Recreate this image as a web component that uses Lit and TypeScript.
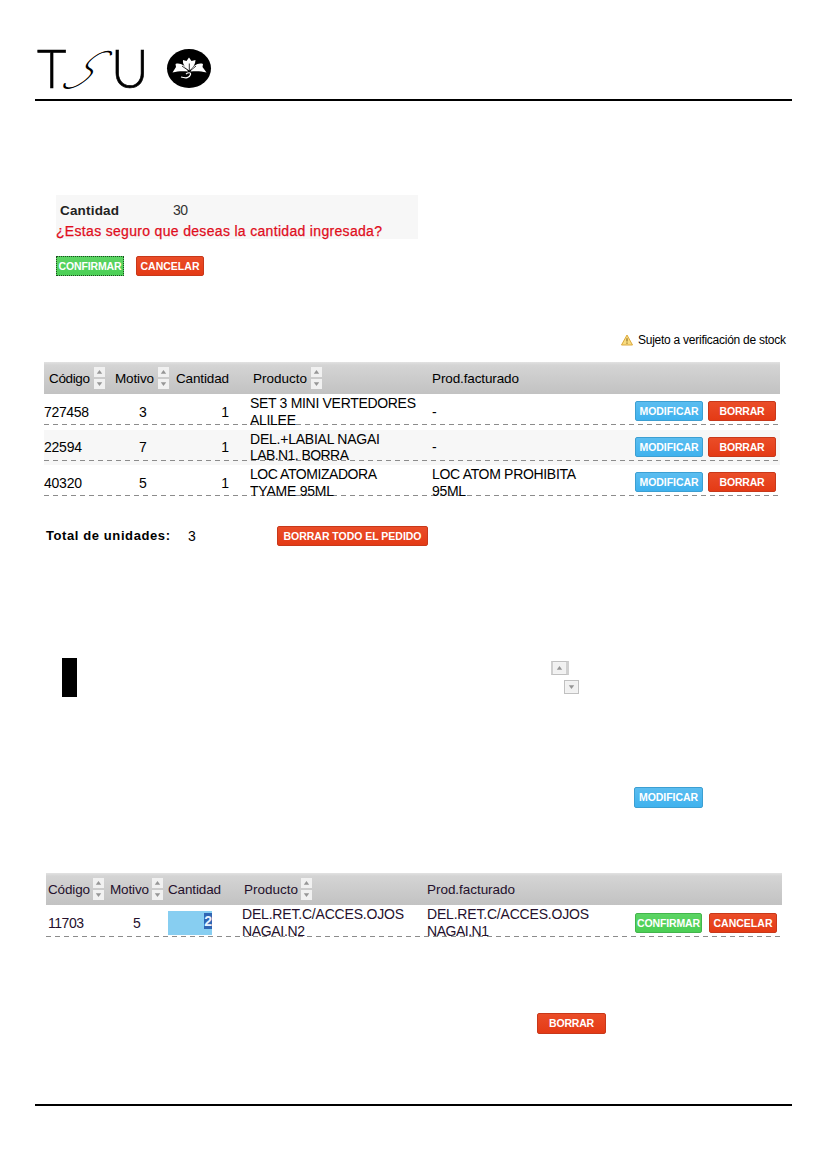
import { LitElement, html, css, svg } from "lit";
import { customElement, property } from "lit/decorators.js";

/** A single line of text tracked out (or in) to a given width. */
@customElement("fit-text")
class FitText extends LitElement {
  @property() text = "";
  @property({ type: Number }) width = 0;
  static styles = css`
    :host { display: inline-block; white-space: pre; }
    .t { display: inline-block; }
  `;
  render() {
    return html`<span class="t">${this.text}</span>`;
  }
  updated() {
    const el = this.renderRoot.querySelector(".t") as HTMLElement;
    el.style.letterSpacing = "0px";
    const natural = el.getBoundingClientRect().width;
    const n = this.text.length;
    if (this.width && n > 1) {
      el.style.letterSpacing = `${(this.width - natural) / (n - 1)}px`;
    }
  }
}

const fit = (text: string, width: number) =>
  html`<fit-text .text=${text} .width=${width}></fit-text>`;

@customElement("action-button")
class ActionButton extends LitElement {
  @property() label = "";
  @property() kind = "red";
  @property({ type: Number }) textWidth = 0;
  static styles = css`
    :host { display: block; }
    .b {
      display: flex; align-items: center; justify-content: center;
      box-sizing: border-box; width: 100%; height: 100%; padding: 0; margin: 0;
      border: 1px solid; border-radius: 2px; color: #fff;
      font: bold 10.5px/12px "Liberation Sans", Arial, sans-serif;
    }
    .red { background: linear-gradient(#ea4d28, #e43a15); border-color: #c8381a; }
    .blue { background: linear-gradient(#5bbdf0, #3fb2ee); border-color: #3c9fd2; }
    .green { background: linear-gradient(#5bd463, #4bcf55); border-color: #43b54c; }
    .focused { border: 1px dotted #1c4a20; border-radius: 0; }
  `;
  render() {
    return html`<button class="b ${this.kind}">${fit(this.label, this.textWidth)}</button>`;
  }
}

const WIDTHS: Record<string, number> = {
  CONFIRMAR: 63, CANCELAR: 59, MODIFICAR: 59, BORRAR: 45, "BORRAR TODO EL PEDIDO": 138,
};
const btn = (label: string, kind: string, cls = "") =>
  html`<action-button class="btn ${cls}" .label=${label} .kind=${kind} .textWidth=${WIDTHS[label]}></action-button>`;

const arrow = (up: boolean) => html`<svg class="arrow" width="11" height="10" viewBox="0 0 11 10">
  <rect width="11" height="10" fill="#f1f1f1"></rect>
  ${up
    ? svg`<path d="M5.5 3 L8.2 6.8 H2.8 Z" fill="#969696"></path>`
    : svg`<path d="M5.5 7 L8.2 3.2 H2.8 Z" fill="#969696"></path>`}
</svg>`;
const sorter = () => html`<span class="sorter">${arrow(true)}${arrow(false)}</span>`;

const rows = [
  { code: ["727458", 45], reason: "3", prod: [["SET 3 MINI VERTEDORES", 166], ["ALILEE", 46]], inv: [["-", 0]] },
  { code: ["22594", 38], reason: "7", prod: [["DEL.+LABIAL NAGAI", 130], ["LAB.N1. BORRA", 99]], inv: [["-", 0]] },
  { code: ["40320", 38], reason: "5", prod: [["LOC ATOMIZADORA", 127], ["TYAME 95ML", 84]], inv: [["LOC ATOM PROHIBITA", 144], ["95ML", 34]] },
] as any[];

const lines = (items: any[]) =>
  html`<div class="lines">${items.map(([t, w]) => html`<div>${fit(t, w)}</div>`)}</div>`;

@customElement("app-root")
class AppRoot extends LitElement {
  static styles = css`
    :host {
      display: block; width: 827px; height: 1169px; overflow: hidden;
      background: #fff; color: #000;
      font: 14px/16px "Liberation Sans", Arial, sans-serif;
    }
    .page { display: flex; flex-direction: column; box-sizing: border-box; height: 1169px; align-items: flex-start; }
    .head { box-sizing: border-box; width: 757px; height: 101px; margin-left: 35px; padding-top: 46px; border-bottom: 2px solid #000; }
    .logo { display: block; overflow: visible; }
    .mark { font-family: Lato, sans-serif; font-weight: 300; }
    .swash { font-weight: 100; }
    .ask { box-sizing: border-box; width: 362px; height: 44px; margin: 94px 0 0 56px; padding-top: 5px; background: #f7f7f7; font-size: 14px; line-height: 21px; }
    .qty { display: flex; height: 21px; padding-left: 4px; }
    .qty .k { width: 113px; font-weight: bold; font-size: 13.5px; color: #222; }
    .qty .v { color: #333; }
    .warn { height: 18px; color: #e00d1c; line-height: 20px; -webkit-text-stroke: 0.25px #e00d1c; }
    .actions { display: flex; gap: 12px; margin: 17px 0 0 56px; }
    .btn { width: 68px; height: 20px; }
    .stock { display: flex; align-items: center; gap: 5px; height: 16px; margin: 56px 0 0 621px; font-size: 12px; }
    .th { display: grid; align-items: center; height: 32px; font-size: 13.5px; background: linear-gradient(#e2e2e2 0, #d4d4d4 3px, #c2c2c2 100%); }
    .cell { display: flex; align-items: center; gap: 4px; }
    .cell fit-text { padding-top: 2px; }
    .sorter { display: flex; flex-direction: column; gap: 2px; }
    .arrow { display: block; }
    .table { width: 736px; }
    .one { margin: 14px 0 0 44px; }
    .two { margin: 65px 0 0 46px; color: #24102c; }
    .one .th { grid-template-columns: 66px 61px 77px 179px auto; padding-left: 5px; }
    .two .th { grid-template-columns: 62px 58px 76px 183px auto; padding-left: 2px; }
    .two .cell { gap: 3px; }
    .row { height: 35.5px; }
    .row:nth-child(odd) { background: #f7f7f7; }
    .tr {
      display: grid; grid-template-columns: 71px 56px 58px 21px 182px 203px auto; align-items: center; height: 31px;
      background-image: repeating-linear-gradient(90deg, #8c8c8c 0 5px, transparent 5px 9px);
      background-size: 100% 1px; background-position: 0 30px; background-repeat: no-repeat;
    }
    .two .tr { grid-template-columns: 62px 54px 4px 44px 30px 185px 208px auto; padding-left: 2px; height: 32px; background-position: 0 31px; }
    .mid { text-align: center; padding-top: 4px; }
    .side { padding-top: 4px; }
    .num { text-align: right; padding-top: 4px; }
    .lines { height: 31px; line-height: 16.5px; overflow: hidden; padding-top: 1px; box-sizing: border-box; }
    .pair { display: flex; gap: 5px; padding-top: 3px; }
    .two .pair { gap: 7px; padding-top: 4px; }
    .two .pair .btn:first-child { width: 67px; }
    .input { display: flex; justify-content: flex-end; height: 24px; margin-top: 5px; background: #87cef1; }
    .sel { height: 16px; margin-top: 2px; line-height: 17px; background: #2f66b4; color: #e8f4ff; font-weight: bold; }
    .total { display: flex; align-items: center; height: 20px; margin: 25px 0 0 46px; }
    .total .k { width: 142px; font-weight: bold; font-size: 13px; }
    .total .v { width: 89px; }
    .total .btn { width: 151px; }
    .legend { display: flex; align-items: flex-start; height: 39px; margin: 112px 0 0 62px; }
    .bar { width: 15px; height: 39px; background: #000; }
    .keys { display: flex; flex-direction: column; gap: 5px; margin: 3px 0 0 474px; }
    .key { display: flex; align-items: center; justify-content: center; box-sizing: border-box; width: 15px; height: 14px; border: 1px solid #c0c0c0; background: #f3f3f3; }
    .key.up { width: 18px; border-right: 3px solid #d0d0d0; border-left: 2px solid #cfcfcf; }
    .key.down { margin-left: 13px; }
    .lone { width: 69px; height: 21px; }
    .edit { margin: 90px 0 0 634px; }
    .del { margin: 76px 0 0 537px; }
    .foot { width: 757px; height: 2px; margin: 70px 0 0 35px; background: #000; }
  `;
  render() {
    return html`<div class="page">
      <header class="head">
        <svg class="logo" width="180" height="46" viewBox="0 0 180 46">
          <g class="mark" fill="#000">
            <text transform="translate(2 41.5) scale(.94 1)" font-size="54" stroke="#000" stroke-width=".6">T</text>
            <text class="swash" transform="translate(22.500 41.5) skewX(-46) scale(.84 1)" font-size="52" stroke="#000" stroke-width="1">S</text>
            <text transform="translate(76 41.5) scale(.96 1)" font-size="54" stroke="#000" stroke-width=".6">U</text>
          </g>
          <ellipse cx="154" cy="22.5" rx="22" ry="19.5" fill="#000"></ellipse>
          <path fill="#fff" d="M154 24.5 C149 21 147.500 17 148 14 L151.500 15 L154 11.500 L156.500 15 L160.500 14 C160.500 18 158 21.500 154.500 24.500 Z"></path>
          <path fill="#fff" d="M153 25.500 C151 19.500 145 16.500 140.500 18 L141 21 L137.500 26.500 C143 25 148 25 153 25.500 Z"></path>
          <path fill="#fff" d="M155.500 25.500 C158 19.500 163 16.500 168 18 L167.500 21 L171.500 26.500 C166 25 161 25 155.500 25.500 Z"></path>
          <path d="M154.300 25 V17.500 M154 25 L147 20 M155 25 L161 20" stroke="#000" stroke-width=".8" fill="none"></path>
          <path d="M151 28 C153 26.500 156 26 155.500 28.500 C154.500 32 151 32.500 146 31" fill="none" stroke="#fff" stroke-width="1.200"></path>
        </svg>
      </header>

      <section class="ask">
        <div class="qty"><span class="k">${fit("Cantidad", 59)}</span><span class="v">${fit("30", 15)}</span></div>
        <div class="warn">${fit("¿Estas seguro que deseas la cantidad ingresada?", 326)}</div>
      </section>
      <div class="actions">${btn("CONFIRMAR", "green focused")}${btn("CANCELAR", "red")}</div>

      <div class="stock">
        <svg width="12" height="12" viewBox="0 0 12 12">
          <path d="M6 1 L11.500 11 H.5 Z" fill="#f8dc80" stroke="#dca93c" stroke-linejoin="round"></path>
          <path d="M6 4.300 V7.500 M6 8.500 V9.700" stroke="#8a6a20" stroke-width="1.100"></path>
        </svg>
        ${fit("Sujeto a verificación de stock", 148)}
      </div>

      <section class="table one">
        <div class="th">
          <div class="cell">${fit("Código", 41)}${sorter()}</div>
          <div class="cell">${fit("Motivo", 39)}${sorter()}</div>
          <div class="cell">${fit("Cantidad", 53)}</div>
          <div class="cell">${fit("Producto", 54)}${sorter()}</div>
          <div class="cell">${fit("Prod.facturado", 87)}</div>
        </div>
        ${rows.map((r) => html`<div class="row"><div class="tr">
          <div class="side">${fit(r.code[0], r.code[1])}</div>
          <div class="mid">${r.reason}</div>
          <div class="num">1</div>
          <div></div>
          ${lines(r.prod)}
          ${r.inv.length > 1 ? lines(r.inv) : html`<div class="side">-</div>`}
          <div class="pair">${btn("MODIFICAR", "blue")}${btn("BORRAR", "red")}</div>
        </div></div>`)}
      </section>

      <div class="total">
        <span class="k">${fit("Total de unidades:", 124)}</span>
        <span class="v">3</span>
        ${btn("BORRAR TODO EL PEDIDO", "red")}
      </div>

      <div class="legend">
        <div class="bar"></div>
        <div class="keys"><span class="key up">${arrow(true)}</span><span class="key down">${arrow(false)}</span></div>
      </div>

      <div class="edit">${btn("MODIFICAR", "blue", "lone")}</div>

      <section class="table two">
        <div class="th">
          <div class="cell">${fit("Código", 42)}${sorter()}</div>
          <div class="cell">${fit("Motivo", 39)}${sorter()}</div>
          <div class="cell">${fit("Cantidad", 53)}</div>
          <div class="cell">${fit("Producto", 54)}${sorter()}</div>
          <div class="cell">${fit("Prod.facturado", 88)}</div>
        </div>
        <div class="tr">
          <div class="side">${fit("11703", 36)}</div>
          <div class="mid">5</div>
          <div></div>
          <div class="input"><span class="sel">2</span></div>
          <div></div>
          ${lines([["DEL.RET.C/ACCES.OJOS", 162], ["NAGAI.N2", 63]])}
          ${lines([["DEL.RET.C/ACCES.OJOS", 162], ["NAGAI.N1", 62]])}
          <div class="pair">${btn("CONFIRMAR", "green")}${btn("CANCELAR", "red")}</div>
        </div>
      </section>

      <div class="del">${btn("BORRAR", "red", "lone")}</div>
      <footer class="foot"></footer>
    </div>`;
  }
}
